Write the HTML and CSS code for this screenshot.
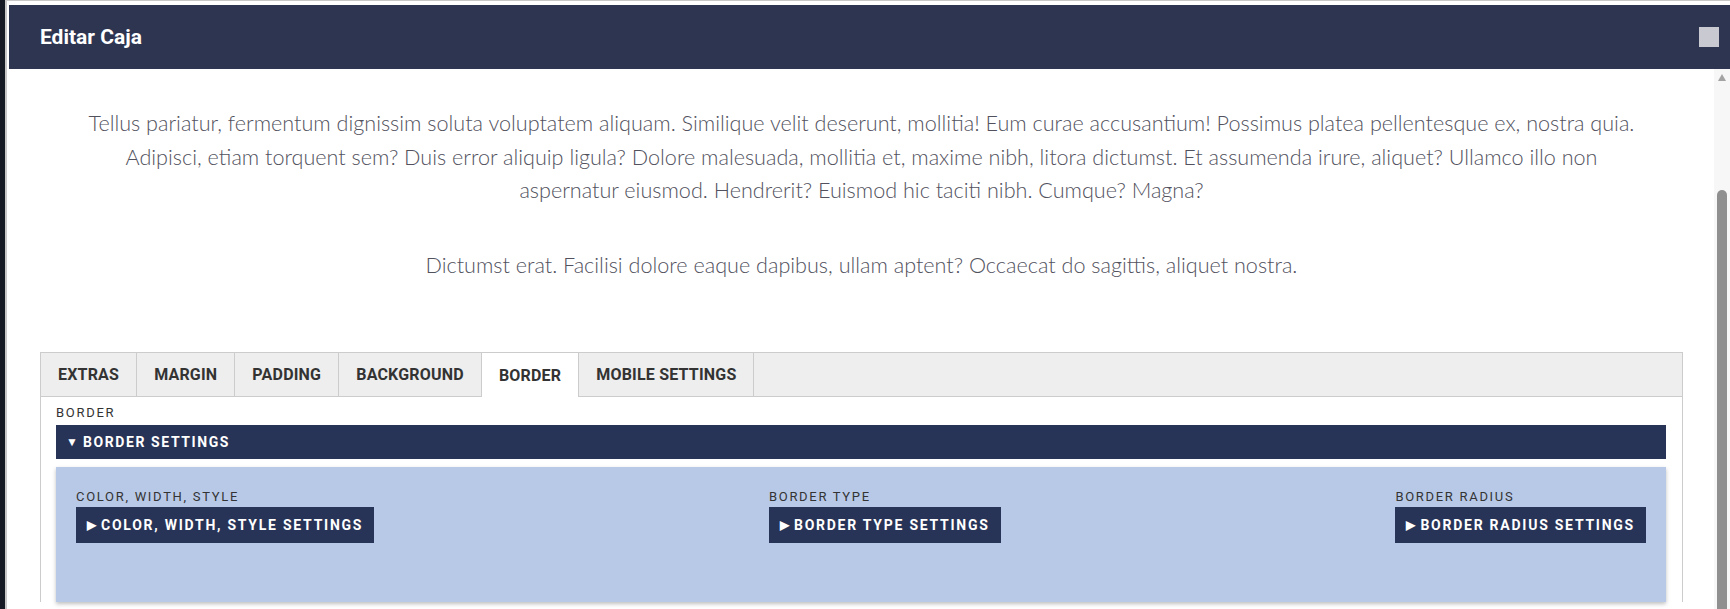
FILE: index.html
```html
<!DOCTYPE html>
<html lang="es">
<head>
<meta charset="utf-8">
<title>Editar Caja</title>
<link rel="stylesheet" href="styles.css">
</head>
<body>
<div class="frame">
  <div class="dialog-header">
    <div class="title">Editar Caja</div>
    <div class="close"></div>
  </div>
  <div class="dialog-body">
    <div class="content">
      <div class="intro">
        <p>Tellus pariatur, fermentum dignissim soluta voluptatem aliquam. Similique velit deserunt, mollitia! Eum curae accusantium! Possimus platea pellentesque ex, nostra quia.<br>Adipisci, etiam torquent sem? Duis error aliquip ligula? Dolore malesuada, mollitia et, maxime nibh, litora dictumst. Et assumenda irure, aliquet? Ullamco illo non<br>aspernatur eiusmod. Hendrerit? Euismod hic taciti nibh. Cumque? Magna?</p>
        <p>Dictumst erat. Facilisi dolore eaque dapibus, ullam aptent? Occaecat do sagittis, aliquet nostra.</p>
      </div>
      <div class="tabs-box">
        <div class="tab-bar">
          <div class="tab">EXTRAS</div>
          <div class="tab">MARGIN</div>
          <div class="tab">PADDING</div>
          <div class="tab">BACKGROUND</div>
          <div class="tab active">BORDER</div>
          <div class="tab">MOBILE SETTINGS</div>
        </div>
        <div class="tab-body">
          <div class="field-label">BORDER</div>
          <div class="section-bar"><span class="tri">&#9660;</span>BORDER SETTINGS</div>
          <div class="panel">
            <div class="col">
              <div class="field-label">COLOR, WIDTH, STYLE</div>
              <div class="btn"><span class="tri">&#9654;</span>COLOR, WIDTH, STYLE SETTINGS</div>
            </div>
            <div class="col">
              <div class="field-label">BORDER TYPE</div>
              <div class="btn"><span class="tri">&#9654;</span>BORDER TYPE SETTINGS</div>
            </div>
            <div class="col">
              <div class="field-label">BORDER RADIUS</div>
              <div class="btn"><span class="tri">&#9654;</span>BORDER RADIUS SETTINGS</div>
            </div>
          </div>
        </div>
      </div>
    </div>
    <div class="scrollbar">
      <div class="arrow-up"></div>
      <div class="thumb"></div>
    </div>
  </div>
</div>
</body>
</html>
```

FILE: styles.css
```css
html, body {
  margin: 0;
  padding: 0;
}
body {
  background: #151a24;
  height: 609px;
  overflow: hidden;
  font-family: Roboto, "Liberation Sans", sans-serif;
}
.frame {
  margin-left: 5px;
  height: 609px;
  box-sizing: border-box;
  background: #ffffff;
  border-left: 2px solid #c8c8c8;
  border-top: 1px solid #c8c8c8;
  padding: 4px 0 0 2px;
  display: flex;
  flex-direction: column;
}
.dialog-header {
  height: 64px;
  flex: none;
  background: #2d3551;
  display: flex;
  align-items: center;
  justify-content: space-between;
  padding: 0 11px 0 31px;
}
.title {
  color: #ffffff;
  font-weight: 700;
  font-size: 21px;
}
.close {
  width: 20px;
  height: 20px;
  background: #c9c9d1;
}
.dialog-body {
  flex: 1;
  min-height: 0;
  display: flex;
}
.content {
  flex: 1;
  min-width: 0;
  padding: 0 31px;
  overflow: hidden;
}
.intro {
  padding-top: 38px;
  text-align: center;
  color: #52525e;
  font-family: Lato, "Open Sans", sans-serif;
  font-weight: 300;
  font-size: 21.6px;
  line-height: 33.5px;
}
.intro p {
  margin: 0;
  white-space: nowrap;
}
.intro p + p {
  margin-top: 41px;
}
.tabs-box {
  margin-top: 70px;
  border: 1px solid #cccccc;
  border-bottom: none;
}
.tab-bar {
  display: flex;
  height: 43px;
  background: #eeeeee;
  border-bottom: 1px solid #cccccc;
}
.tab {
  display: flex;
  align-items: center;
  padding: 0 17px;
  border-right: 1px solid #cccccc;
  font-weight: 700;
  font-size: 16px;
  color: #333333;
  letter-spacing: 0.2px;
}
.tab.active {
  background: #ffffff;
  height: 44px;
}
.tab-body {
  padding: 6px 16px 0 15px;
}
.field-label {
  font-size: 13px;
  line-height: 20px;
  letter-spacing: 1.7px;
  color: #333333;
  margin-bottom: 2px;
}
.section-bar {
  height: 34px;
  display: flex;
  align-items: center;
  padding-left: 10px;
  background: #283457;
  color: #ffffff;
  font-weight: 700;
  font-size: 14px;
  letter-spacing: 1.6px;
}
.tri {
  font-size: 12px;
  margin-right: 5px;
  letter-spacing: 0;
}
.panel {
  margin-top: 8px;
  background: #b8c9e7;
  box-shadow: 0 2px 4px rgba(0, 0, 0, 0.25);
  padding: 20px 20px 59px;
  display: flex;
  justify-content: space-between;
}
.col .field-label {
  margin-bottom: 0;
}
.btn {
  display: inline-flex;
  align-items: center;
  height: 36px;
  padding: 0 11px;
  background: #283457;
  color: #ffffff;
  font-weight: 700;
  font-size: 14px;
  letter-spacing: 1.75px;
}
.scrollbar {
  width: 16px;
  flex: none;
  background: #f7f7f7;
  display: flex;
  flex-direction: column;
  align-items: center;
}
.arrow-up {
  margin-top: 5px;
  width: 0;
  height: 0;
  border-left: 4.5px solid transparent;
  border-right: 4.5px solid transparent;
  border-bottom: 7px solid #a3a3a3;
}
.thumb {
  margin-top: 109px;
  flex: 1;
  width: 10px;
  background: #8f8f8f;
  border-radius: 5px 5px 0 0;
}
```
